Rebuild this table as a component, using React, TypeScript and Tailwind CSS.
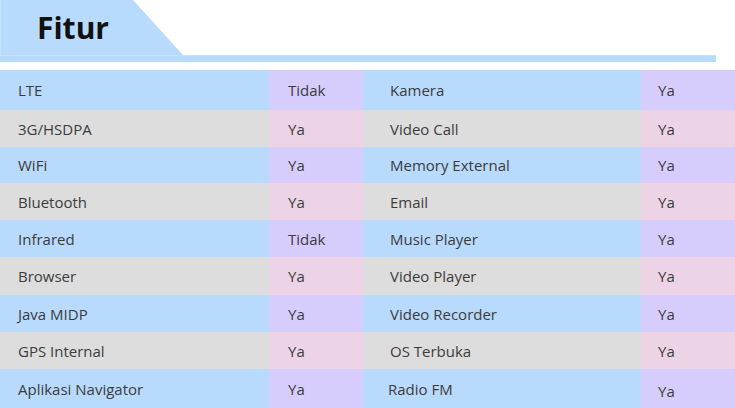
import React from 'react';

type Row = { a: string; av: string; b: string; bv: string; h: string };

const rows: Row[] = [
  { a: 'LTE', av: 'Tidak', b: 'Kamera', bv: 'Ya', h: 'h-[40px]' },
  { a: '3G/HSDPA', av: 'Ya', b: 'Video Call', bv: 'Ya', h: 'h-[37px]' },
  { a: 'WiFi', av: 'Ya', b: 'Memory External', bv: 'Ya', h: 'h-[36px]' },
  { a: 'Bluetooth', av: 'Ya', b: 'Email', bv: 'Ya', h: 'h-[37px]' },
  { a: 'Infrared', av: 'Tidak', b: 'Music Player', bv: 'Ya', h: 'h-[37px]' },
  { a: 'Browser', av: 'Ya', b: 'Video Player', bv: 'Ya', h: 'h-[38px]' },
  { a: 'Java MIDP', av: 'Ya', b: 'Video Recorder', bv: 'Ya', h: 'h-[37px]' },
  { a: 'GPS Internal', av: 'Ya', b: 'OS Terbuka', bv: 'Ya', h: 'h-[37px]' },
  { a: 'Aplikasi Navigator', av: 'Ya', b: 'Radio FM', bv: 'Ya', h: 'h-[39px]' },
];

export default function App() {
  return (
    <div className="w-[735px] h-[408px] bg-white overflow-hidden font-['Segoe_UI','Open_Sans',sans-serif]">
      {/* Header tab */}
      <div className="h-[55px] w-[183px] bg-[#b8dafc] border-l border-[#c9e3fd] [clip-path:polygon(0_0,133px_0,183px_100%,0_100%)] flex items-center pl-[36px]">
        <h1 className="text-[30px] font-bold text-[#111] leading-none pt-[1px]">Fitur</h1>
      </div>
      <div className="w-[716px] h-[7px] bg-[#b8dafc] border-t border-[#c6e1fd]" />

      {/* Feature table */}
      <div className="mt-[8px] flex flex-col text-[15px] text-[#3c3c3c]">
        {rows.map((r, i) => {
          const odd = i % 2 === 0;
          const label = odd ? 'bg-[#b8dafc]' : 'bg-[#dddddd]';
          const value = odd ? 'bg-[#d7cdfc]' : 'bg-[#ecd3e6]';
          const last = i === rows.length - 1;
          return (
            <div key={r.a} className={`flex ${r.h}`}>
              <div className={`w-[269px] flex items-center pl-[18px] pt-[1px] ${label}`}>{r.a}</div>
              <div className={`w-[94px] flex items-center pl-[19px] pt-[1px] ${value}`}>{r.av}</div>
              <div className={`w-[278px] flex items-center pt-[1px] ${last ? 'pl-[25px]' : 'pl-[27px]'} ${label}`}>{r.b}</div>
              <div className={`w-[94px] flex items-center pl-[17px] ${last ? 'pt-[5px]' : 'pt-[1px]'} ${value}`}>{r.bv}</div>
            </div>
          );
        })}
      </div>
    </div>
  );
}
